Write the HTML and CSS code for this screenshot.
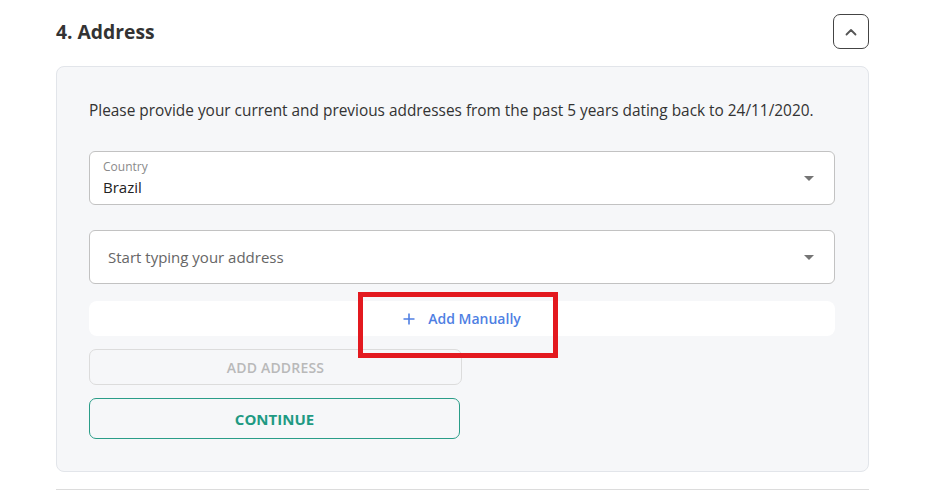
FILE: index.html
```html
<!DOCTYPE html>
<html lang="en">
<head>
<meta charset="utf-8">
<title>Address</title>
<link rel="stylesheet" href="styles.css">
</head>
<body>
<main class="section">
  <header class="section-head">
    <h2 class="section-title">4. Address</h2>
    <button class="toggle" type="button" aria-label="Collapse">
      <svg width="14" height="14" viewBox="0 0 14 14"><path d="M2.5 9.5 L7 5 L11.5 9.5" fill="none" stroke="#555" stroke-width="1.8" stroke-linecap="round" stroke-linejoin="round"/></svg>
    </button>
  </header>
  <div class="card">
    <p class="intro">Please provide your current and previous addresses from the past 5 years dating back to 24/11/2020.</p>
    <div class="field field-select">
      <div class="field-body">
        <span class="field-label">Country</span>
        <span class="field-value">Brazil</span>
      </div>
      <span class="caret"></span>
    </div>
    <div class="field field-input">
      <span class="placeholder">Start typing your address</span>
      <span class="caret"></span>
    </div>
    <div class="manual">
      <svg class="plus" width="12" height="12" viewBox="0 0 12 12"><path d="M6 0.5 V11.5 M0.5 6 H11.5" stroke="#4f7fe3" stroke-width="1.6"/></svg>
      <span>Add Manually</span>
    </div>
    <button class="btn btn-disabled" type="button">ADD ADDRESS</button>
    <button class="btn btn-continue" type="button">CONTINUE</button>
    <div class="highlight"></div>
  </div>
  <hr class="rule">
</main>
</body>
</html>
```
FILE: styles.css
```css
* { box-sizing: border-box; }
html, body { margin: 0; padding: 0; background: #fff; }
body {
  font-family: "Open Sans", "Noto Sans", "Liberation Sans", sans-serif;
  color: #333;
}
.section {
  width: 813px;
  margin-left: 56px;
  padding-top: 14px;
}
.section-head {
  display: flex;
  align-items: center;
  justify-content: space-between;
  height: 35px;
  margin-bottom: 17px;
}
.section-title {
  margin: 0;
  font-size: 19.3px;
  font-weight: 700;
  color: #333;
  line-height: 1;
}
.toggle {
  width: 36px;
  height: 35px;
  border: 1.3px solid #444;
  border-radius: 7px;
  background: #fff;
  display: flex;
  align-items: center;
  justify-content: center;
  padding: 0;
  margin-right: 0;
}
.card {
  position: relative;
  background: #f6f7f9;
  border: 1px solid #e2e5ea;
  border-radius: 8px;
  padding: 33px 32px 32px 32px;
  display: flex;
  flex-direction: column;
  align-items: flex-start;
}
.intro {
  margin: 0 0 29px 0;
  font-size: 15.4px;
  line-height: 22px;
  color: #333;
}
.field {
  width: 746px;
  height: 54px;
  background: #fff;
  border: 1px solid #c2c2c2;
  border-radius: 6px;
  display: flex;
  align-items: center;
  justify-content: space-between;
  padding: 0 20px 0 13px;
}
.field-body {
  display: flex;
  flex-direction: column;
}
.field-label {
  font-size: 12px;
  line-height: 14px;
  color: #8a8a8a;
  margin-top: 1px;
}
.field-value {
  font-size: 15px;
  line-height: 21px;
  color: #222;
  margin-top: 3px;
}
.field-input {
  margin-top: 25px;
  padding-left: 18px;
}
.placeholder {
  font-size: 15px;
  color: #666;
}
.caret {
  width: 0;
  height: 0;
  border-left: 5px solid transparent;
  border-right: 5px solid transparent;
  border-top: 5px solid #757575;
}
.manual {
  width: 746px;
  height: 35px;
  margin-top: 17px;
  background: #fff;
  border-radius: 8px;
  display: flex;
  align-items: center;
  justify-content: center;
  gap: 13px;
  font-size: 14px;
  font-weight: 600;
  color: #4f7fe3;
}
.btn {
  font-family: inherit;
  border-radius: 7px;
  background: transparent;
  text-transform: uppercase;
  padding: 0;
}
.btn-disabled {
  width: 373px;
  height: 36px;
  margin-top: 13px;
  border: 1px solid #dcdcdc;
  color: #b9b9b9;
  font-size: 14px;
  font-weight: 600;
  letter-spacing: 0.2px;
}
.btn-continue {
  width: 371px;
  height: 41px;
  margin-top: 13px;
  border: 1px solid #2a9d88;
  color: #1f9a83;
  font-size: 15px;
  font-weight: 700;
}
.highlight {
  position: absolute;
  left: 301px;
  top: 225px;
  width: 200px;
  height: 66px;
  border: 5px solid #e3191f;
  pointer-events: none;
}
.rule {
  margin: 17px 0 0 0;
  border: 0;
  border-top: 1px solid #dcdcdc;
}
```
